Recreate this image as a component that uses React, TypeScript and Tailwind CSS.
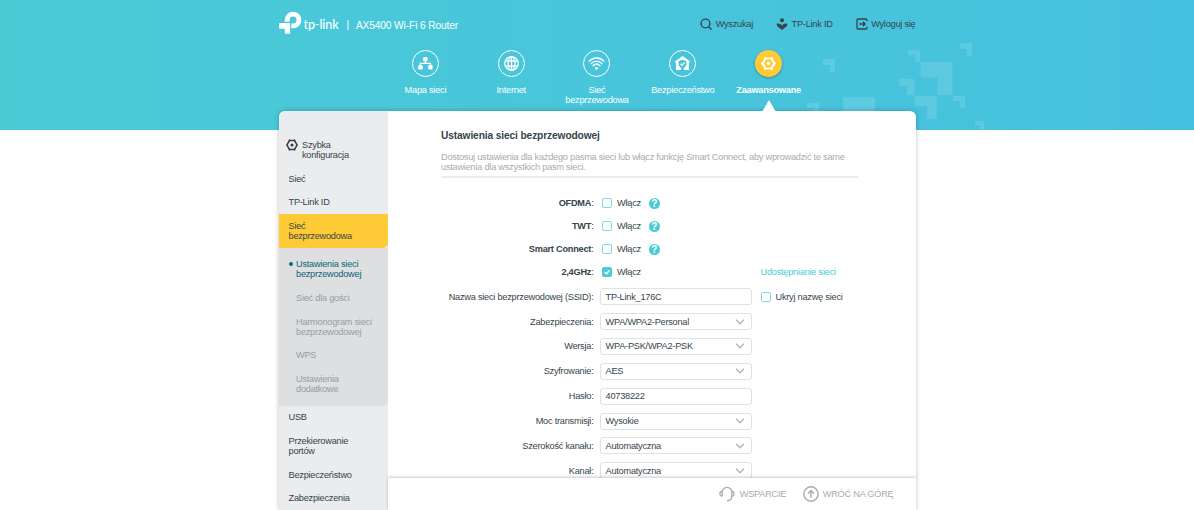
import React from 'react';
import { clsx } from 'clsx';

const NAV_ITEMS = [
  { id: 'map', label: 'Mapa sieci', icon: MapIcon },
  { id: 'internet', label: 'Internet', icon: GlobeIcon },
  { id: 'wireless', label: 'Sieć bezprzewodowa', icon: WifiIcon },
  { id: 'security', label: 'Bezpieczeństwo', icon: HomeShieldIcon },
  { id: 'advanced', label: 'Zaawansowane', icon: GearIcon, active: true },
];

const SUB_ITEMS = [
  { label: 'Ustawienia sieci bezprzewodowej', active: true },
  { label: 'Sieć dla gości' },
  { label: 'Harmonogram sieci bezprzewodowej' },
  { label: 'WPS' },
  { label: 'Ustawienia dodatkowe' },
];

const TOGGLES = [
  { label: 'OFDMA', help: true },
  { label: 'TWT', help: true },
  { label: 'Smart Connect', help: true },
  { label: '2,4GHz', checked: true, link: 'Udostępnianie sieci' },
];

const FIELDS = [
  { label: 'Nazwa sieci bezprzewodowej (SSID):', value: 'TP-Link_176C', hide: 'Ukryj nazwę sieci' },
  { label: 'Zabezpieczenia:', value: 'WPA/WPA2-Personal', select: true },
  { label: 'Wersja:', value: 'WPA-PSK/WPA2-PSK', select: true },
  { label: 'Szyfrowanie:', value: 'AES', select: true },
  { label: 'Hasło:', value: '40738222' },
  { label: 'Moc transmisji:', value: 'Wysokie', select: true },
  { label: 'Szerokość kanału:', value: 'Automatyczna', select: true },
  { label: 'Kanał:', value: 'Automatyczna', select: true },
];

function MapIcon() {
  return (
    <svg viewBox="0 0 27 27" className="w-[27px] h-[27px]" fill="currentColor">
      <rect x="11.2" y="7" width="4.4" height="4.3" rx="1" />
      <rect x="6.2" y="14.9" width="4.4" height="4.5" rx="1" />
      <rect x="16.2" y="14.9" width="4.4" height="4.5" rx="1" />
      <path d="M13.4 11v2.3M8.4 15.5v-2.2h10.1v2.2" fill="none" stroke="currentColor" strokeWidth="1.2" />
    </svg>
  );
}

function GlobeIcon() {
  return (
    <svg viewBox="0 0 27 27" className="w-[27px] h-[27px]" fill="none" stroke="currentColor" strokeWidth="1.3">
      <circle cx="13.5" cy="13.5" r="6.8" />
      <ellipse cx="13.5" cy="13.5" rx="3.4" ry="6.8" />
      <path d="M13.5 6.6v13.8M7.2 11h12.6M7.2 16h12.6" />
    </svg>
  );
}

function WifiIcon() {
  return (
    <svg viewBox="0 0 27 27" className="w-[27px] h-[27px]" fill="none" stroke="currentColor" strokeWidth="1.4" strokeLinecap="round">
      <path d="M6.2 11.1c4.1-4.2 10.5-4.2 14.6 0M8.1 13.5c3.1-3.2 7.7-3.2 10.8 0M10.1 15.7c2-2 4.8-2 6.8 0" />
      <path d="M11.5 18q2-1.8 4 0l-2 2.2z" fill="currentColor" stroke="none" />
    </svg>
  );
}

function HomeShieldIcon() {
  return (
    <svg viewBox="0 0 27 27" className="w-[27px] h-[27px]" fill="currentColor">
      <path d="M13.5 6l7.6 5.4-.8 1.5H20V20H7v-7.1h-.3l-.8-1.5z" />
      <path d="M13.5 9.8l3.9 1.3v2.9c0 2-1.3 3.1-2.6 3.7V20h-2.6v-2.3c-1.3-.6-2.6-1.7-2.6-3.7v-2.9z" fill="#48c5da" />
      <path d="M11.6 13.7l1.5 1.5 2.5-2.8" fill="none" stroke="currentColor" strokeWidth="1.5" />
    </svg>
  );
}

function GearIcon() {
  return (
    <svg viewBox="0 0 27 27" className="w-[27px] h-[27px]" fill="none" stroke="currentColor">
      <path d="M10.6 8.5h5.8l2.9 5-2.9 5h-5.8l-2.9-5z" strokeWidth="1.7" strokeLinejoin="round" />
      <g fill="currentColor" stroke="none">
        <circle cx="10.3" cy="8.2" r="1.3" />
        <circle cx="16.7" cy="8.2" r="1.3" />
        <circle cx="19.7" cy="13.5" r="1.3" />
        <circle cx="16.7" cy="18.8" r="1.3" />
        <circle cx="10.3" cy="18.8" r="1.3" />
        <circle cx="7.3" cy="13.5" r="1.3" />
        <circle cx="13.5" cy="13.5" r="1.8" />
      </g>
    </svg>
  );
}

function Logo() {
  return (
    <svg viewBox="0 0 23 24" className="w-[23px] h-[24px]" fill="#fff">
      <path d="M0 13a.9.9 0 0 1 .9-.9h9.3a.9.9 0 0 1 .9.9v8.9a.9.9 0 0 1-.9.9H6.700a.9.9 0 0 1-.9-.9v-4.200H.9a.9.9 0 0 1-.9-.9z" />
      <path d="M8.200 10.700V8.600a5.900 5.900 0 1 1 5.900 6.300h-1.800" fill="none" stroke="#fff" strokeWidth="4.900" />
    </svg>
  );
}

// Corner shapes scattered behind the header
function HeaderPattern() {
  return (
    <svg viewBox="0 0 200 130" className="absolute left-[800px] top-0 w-[200px] h-[130px]" fill="#fff" fillOpacity="0.12">
      <path d="M23 59h12v13h-5v-7h-7z" />
      <path d="M108 50h12v12h-5v-7h-7z" />
      <path d="M160 43h12v13h-5v-7h-7z" />
      <path d="M120.5 62h32v33h-15V77.5h-17z" />
      <path d="M99 79h15.5v16H107v-9h-8z" />
      <path d="M114.5 96h22.3v22.7H127v-12.5h-12.5z" />
      <path d="M153 96h12v12.3h-5v-7h-7z" />
      <path d="M175 121h9v9h-4v-5h-5z" />
      <path d="M7 103h12v12h-5v-7H7z" />
      <path d="M43 97h32v20H43z" />
    </svg>
  );
}

function Checkbox({ checked }: { checked?: boolean }) {
  return (
    <span
      className={clsx(
        'w-[10px] h-[10px] rounded-[2px] border shrink-0 flex items-center justify-center',
        checked ? 'bg-[#4acbd6] border-[#4acbd6]' : 'bg-white border-[#7fdbe2]'
      )}
    >
      {checked && (
        <svg viewBox="0 0 8 8" className="w-2 h-2" fill="none" stroke="#fff" strokeWidth="1.4">
          <path d="M1.7 4l1.7 1.7L6.5 2.5" />
        </svg>
      )}
    </span>
  );
}

function SideItem({ label, active }: { label: string; active?: boolean }) {
  return (
    <div className={clsx('pl-[10px] pr-[22px] py-[6.85px]', active && 'bg-[#fecb36] rounded-br-[5px]')}>{label}</div>
  );
}

export default function App() {
  return (
    <div className="relative h-[510px] overflow-hidden bg-white font-['Liberation_Sans',sans-serif] text-[9.2px] leading-[10px] tracking-[-0.23px] text-[#36444b]">
      <div className="absolute inset-x-0 top-0 h-[130px] bg-linear-to-r from-[#4acbd6] to-[#46c0df]">
        <HeaderPattern />
      </div>

      <div className="relative mx-auto w-[637px] h-full flex flex-col">
        {/* Top bar */}
        <header className="h-[50px] flex items-start justify-between shrink-0">
          <div className="flex items-center pt-[11px] text-white">
            <Logo />
            <span className="font-['Lato',sans-serif] font-medium text-[12.5px] leading-[14px] tracking-[-0.1px] ml-[2px] w-[36px] pt-[3px]">tp-link</span>
            <span className="text-[10px] ml-[7px] pt-[4px]">|</span>
            <span className="text-[10.2px] tracking-[-0.12px] ml-[7px] pt-[5px]">AX5400 Wi-Fi 6 Router</span>
          </div>
          <div className="flex items-center pt-[18px]">
            <svg viewBox="0 0 12 12" className="w-3 h-3" fill="none" stroke="#36444b" strokeWidth="1.4">
              <circle cx="5.5" cy="5.5" r="4.4" />
              <path d="M8.7 8.7l2.8 2.8" />
            </svg>
            <span className="ml-[4px]">Wyszukaj</span>
            <svg viewBox="0 0 12 12" className="w-3 h-3 ml-[22.5px]" fill="#36444b">
              <circle cx="6" cy="2.2" r="2" />
              <path d="M.9 5.500c2.200-.4 4.100.3 5.100 2.200 1-1.900 2.900-2.600 5.100-2.200.4 1.400 0 2.400-.9 3.200L6 12 1.800 8.700C.9 7.900.5 6.900.9 5.500z" />
            </svg>
            <span className="ml-[4px]">TP-Link ID</span>
            <svg viewBox="0 0 12 12" className="w-3 h-3 ml-[23.5px]" fill="none" stroke="#36444b" strokeWidth="1.3">
              <path d="M11 3.300V2.200A1.200 1.200 0 0 0 9.800 1H2.200A1.200 1.200 0 0 0 1 2.200v7.600A1.200 1.200 0 0 0 2.200 11h7.600a1.200 1.200 0 0 0 1.200-1.200V8.700M3.300 6h5.800M6.900 3.700L9.200 6 6.900 8.300" />
            </svg>
            <span className="ml-[3px]">Wyloguj się</span>
          </div>
        </header>

        <nav className="h-[61px] flex justify-center shrink-0 text-white">
          {NAV_ITEMS.map((item) => (
            <div key={item.id} className="relative w-[85.8px] flex flex-col items-center text-center">
              <div
                className={clsx(
                  'w-[27px] h-[27px] rounded-full flex items-center justify-center',
                  item.active ? 'bg-[#fecb36] shadow-[0_1px_3px_rgba(0,0,0,0.3)]' : 'border border-white'
                )}
              >
                <div className="shrink-0">
                  <item.icon />
                </div>
              </div>
              <span className={clsx('mt-[8px] w-[72px]', item.active && 'font-bold')}>{item.label}</span>
              {item.active && (
                <svg viewBox="0 0 14 12" className="absolute top-[50px] w-[14px] h-[12px] z-10" fill="#fff">
                  <path d="M7 0l7 12H0z" />
                </svg>
              )}
            </div>
          ))}
        </nav>

        <div className="grow min-h-0 flex rounded-t-[6px] bg-white shadow-[0_0_5px_rgba(0,0,0,0.25)] overflow-hidden">
          <aside className="w-[109.5px] shrink-0 bg-[#eaecee] pt-[22.2px]">
            <div className="flex pl-[7.5px] pr-[20px] py-[6.85px]">
              <svg viewBox="6 6 15 15" className="w-[12px] h-[12px] shrink-0 -mt-px" fill="none" stroke="#36444b">
                <path d="M10.3 8h6.4l3.2 5.5-3.2 5.5h-6.4l-3.2-5.5z" strokeWidth="1.9" />
                <path d="M10.3 6.5v3M16.7 6.5v3M10.3 17.5v3M16.7 17.5v3" strokeWidth="1.6" />
                <circle cx="13.5" cy="13.5" r="2" fill="#36444b" stroke="none" />
              </svg>
              <span className="ml-[4px]">Szybka konfiguracja</span>
            </div>
            <SideItem label="Sieć" />
            <SideItem label="TP-Link ID" />
            <SideItem label="Sieć bezprzewodowa" active />
            <div className="bg-[#dddfe1] rounded-br-[5px] py-[4.6px] text-[#999c9f]">
              {SUB_ITEMS.map((item) => (
                <div key={item.label} className="flex pl-[10px] pr-[12px] py-[6.85px]">
                  <span className={clsx('w-[4px] h-[4px] mt-[3px] rounded-full shrink-0', item.active && 'bg-[#0f6478]')} />
                  <span className={clsx('ml-[3.5px]', item.active && 'text-[#0f6478]')}>{item.label}</span>
                </div>
              ))}
            </div>
            <SideItem label="USB" />
            <SideItem label="Przekierowanie portów" />
            <SideItem label="Bezpieczeństwo" />
            <SideItem label="Zabezpieczenia" />
          </aside>

          <main className="grow min-w-0 flex flex-col">
            <div className="grow min-h-0 overflow-hidden pl-[53px] pt-[19px]">
              <h1 className="text-[10.2px] tracking-[-0.12px] leading-[12px] font-bold">Ustawienia sieci bezprzewodowej</h1>
              <p className="mt-[10px] w-[416.5px] text-[#a9abad]">
                Dostosuj ustawienia dla każdego pasma sieci lub włącz funkcję Smart Connect, aby wprowadzić te same ustawienia dla wszystkich pasm sieci.
              </p>
              <div className="mt-[4px] w-[416.5px] h-[2px] bg-[#ececec]" />

              <div className="mt-[13.8px]">
                {TOGGLES.map((row) => (
                  <div key={row.label} className="h-[23px] flex items-center">
                    <div className="w-[152.5px] text-right">
                      <b>{row.label}</b>:
                    </div>
                    <div className="ml-[8.5px] w-[158.5px] flex items-center">
                      <Checkbox checked={row.checked} />
                      <span className="ml-[5px]">Włącz</span>
                      {row.help && (
                        <span className="ml-[8px] w-[11px] h-[11px] rounded-full bg-[#4acbd6] text-white text-[10px] tracking-normal font-bold text-center leading-[11px]">?</span>
                      )}
                    </div>
                    {row.link && <a className="text-[#4acbd6]">{row.link}</a>}
                  </div>
                ))}
              </div>

              <div className="mt-[0.4px]">
                {FIELDS.map((field) => (
                  <div key={field.label} className="h-[24.9px] flex items-center">
                    <div className="w-[152.5px] text-right">{field.label}</div>
                    <div className="ml-[6px] w-[152px] h-[17px] border border-[#dfe1e2] rounded-[3px] bg-white pl-[5px] pr-[6px] flex items-center justify-between">
                      <span>{field.value}</span>
                      {field.select && (
                        <svg viewBox="0 0 10 6" className="w-[10px] h-[6px]" fill="none" stroke="#b4b6b8" strokeWidth="1.5">
                          <path d="M1 .8l4 4 4-4" />
                        </svg>
                      )}
                    </div>
                    {field.hide && (
                      <div className="ml-[9px] flex items-center">
                        <Checkbox />
                        <span className="ml-[5px]">{field.hide}</span>
                      </div>
                    )}
                  </div>
                ))}
              </div>
            </div>

            <footer className="relative h-[32px] shrink-0 bg-white shadow-[0_-1px_3px_rgba(0,0,0,0.22)] flex items-center justify-end pr-[22px] text-[#a9abad]">
              <svg viewBox="0 0 16 16" className="w-4 h-4" fill="none" stroke="#a9abad" strokeWidth="1.3">
                <path d="M3.2 10V6.200a4.800 4.800 0 0 1 9.600 0V10c0 3-1.600 4.600-4.800 4.900" />
                <path d="M3.200 5.500H2.500a1.500 1.500 0 0 0-1.500 1.500v1.500a1.500 1.500 0 0 0 1.500 1.500h.7M12.800 5.500h.7A1.500 1.500 0 0 1 15 7v1.500a1.500 1.500 0 0 1-1.500 1.500h-.7" />
              </svg>
              <span className="ml-[5px]">WSPARCIE</span>
              <svg viewBox="0 0 16 16" className="w-4 h-4 ml-[16.5px]" fill="none" stroke="#a9abad" strokeWidth="1.4">
                <circle cx="8" cy="8" r="7.2" />
                <path d="M8 11.8V4.8M4.9 7.7L8 4.6l3.1 3.1" />
              </svg>
              <span className="ml-[4px]">WRÓĆ NA GÓRĘ</span>
            </footer>
          </main>
        </div>
      </div>
    </div>
  );
}
